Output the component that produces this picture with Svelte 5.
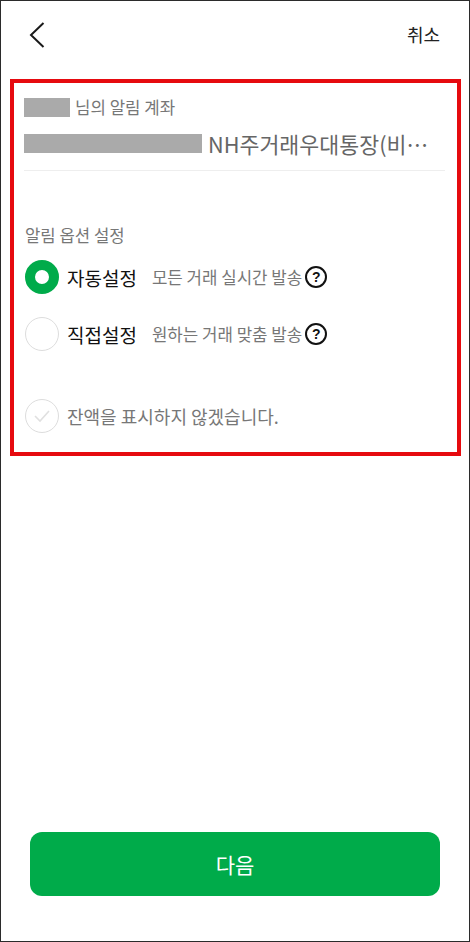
<script lang="ts">
  let mode = $state('auto');
  let hideBalance = $state(false);

  const options = [
    { id: 'auto', label: '자동설정', desc: '모든 거래 실시간 발송' },
    { id: 'manual', label: '직접설정', desc: '원하는 거래 맞춤 발송' }
  ];
</script>

<div class="screen">
  <header class="topbar">
    <button type="button" class="back" aria-label="뒤로">
      <svg width="18" height="28" viewBox="0 0 18 28" fill="none" stroke="#1a1a1a" stroke-width="2">
        <path d="M15.5 2 L3 14 L15.5 26" />
      </svg>
    </button>
    <button type="button" class="cancel">취소</button>
  </header>

  <main class="panel">
    <div class="owner">
      <span class="mask mask--name"></span>
      <span>님의 알림 계좌</span>
    </div>
    <div class="account">
      <span class="mask mask--number"></span>
      <span class="account__name">NH주거래우대통장(비…</span>
    </div>

    <div class="section-title">알림 옵션 설정</div>

    <div class="options">
      {#each options as opt}
        <div class="option">
          <button
            type="button"
            class="radio"
            class:radio--on={mode === opt.id}
            aria-label={opt.label}
            onclick={() => (mode = opt.id)}
          ></button>
          <span class="option__label">{opt.label}</span>
          <span class="option__desc">{opt.desc}</span>
          <span class="help">?</span>
        </div>
      {/each}
    </div>

    <div class="balance">
      <button
        type="button"
        class="check"
        aria-label="잔액 숨김"
        onclick={() => (hideBalance = !hideBalance)}
      >
        <svg width="20" height="16" viewBox="0 0 20 16" fill="none" stroke="#e0e0e0" stroke-width="1.6">
          <path d="M3 8 L8 13 L17 3" />
        </svg>
      </button>
      <span>잔액을 표시하지 않겠습니다.</span>
    </div>
  </main>

  <button type="button" class="next">다음</button>
</div>

<style>
  :global(body) {
    margin: 0;
    background: #fff;
  }

  .screen {
    box-sizing: border-box;
    width: 470px;
    height: 942px;
    display: flex;
    flex-direction: column;
    border: 1px solid #2b2b2b;
    background: #fff;
    font-family: "Noto Sans CJK KR", "Noto Sans", sans-serif;
  }

  button {
    appearance: none;
    border: none;
    background: none;
    padding: 0;
    font: inherit;
    cursor: pointer;
  }

  .topbar {
    box-sizing: border-box;
    height: 78px;
    display: flex;
    align-items: flex-start;
    justify-content: space-between;
    padding: 20px 29px 0 27px;
    flex: none;
  }

  .back {
    display: flex;
    height: 28px;
  }

  .cancel {
    font-size: 18px;
    line-height: 26px;
    color: #222;
  }

  .panel {
    box-sizing: border-box;
    width: 451px;
    height: 377px;
    margin-left: 9px;
    border: 4px solid #e60a0f;
    padding: 10px 12px 0 10px;
    flex: none;
  }

  .owner {
    display: flex;
    align-items: center;
    gap: 5px;
    height: 28px;
    font-size: 16.8px;
    color: #777;
  }

  .mask {
    display: block;
    background: #aaa;
  }

  .mask--name {
    width: 46px;
    height: 19px;
  }

  .mask--number {
    width: 178px;
    height: 19px;
  }

  .account {
    display: flex;
    align-items: center;
    gap: 6px;
    height: 50px;
    box-sizing: border-box;
    padding-bottom: 5px;
    border-bottom: 1px solid #eee;
    font-size: 21.7px;
    color: #666;
  }

  .section-title {
    margin: 51px 0 0 1px;
    height: 26px;
    line-height: 26px;
    font-size: 16.7px;
    color: #777;
  }

  .options {
    margin: 12px 0 0 1px;
    display: flex;
    flex-direction: column;
    gap: 23px;
  }

  .option {
    display: flex;
    align-items: center;
    height: 34px;
  }

  .radio {
    box-sizing: border-box;
    width: 34px;
    height: 34px;
    border-radius: 50%;
    border: 1px solid #ddd;
    margin-right: 8px;
  }

  .radio--on {
    border: 10px solid #00ab4a;
    background: #fff;
  }

  .option__label {
    font-size: 19px;
    font-weight: 400;
    color: #111;
    margin-right: 15px;
  }

  .option__desc {
    font-size: 16.8px;
    color: #777;
  }

  .help {
    box-sizing: border-box;
    width: 22px;
    height: 22px;
    margin-left: 3px;
    border: 2px solid #111;
    border-radius: 50%;
    display: flex;
    align-items: center;
    justify-content: center;
    font-family: "Liberation Sans", sans-serif;
    font-size: 14px;
    font-weight: 700;
    color: #111;
  }

  .balance {
    margin: 48px 0 0 1px;
    display: flex;
    align-items: center;
    gap: 8px;
    height: 34px;
    font-size: 18px;
    color: #777;
  }

  .check {
    box-sizing: border-box;
    width: 34px;
    height: 34px;
    border-radius: 50%;
    border: 1px solid #ddd;
    display: flex;
    align-items: center;
    justify-content: center;
  }

  .next {
    width: 410px;
    height: 64px;
    margin: auto 0 45px 29px;
    border-radius: 12px;
    background: #00ab4a;
    color: #fff;
    font-size: 21px;
    flex: none;
  }
</style>
